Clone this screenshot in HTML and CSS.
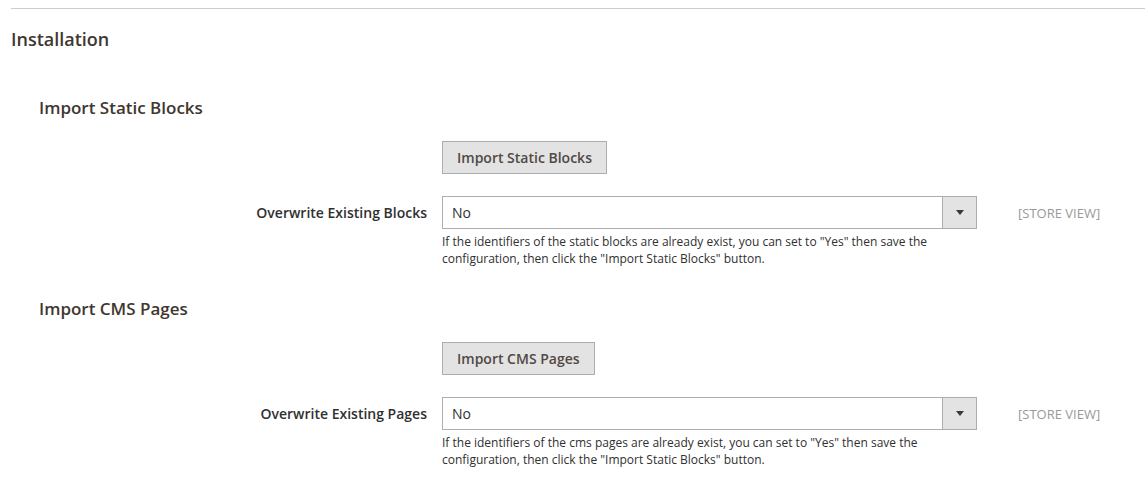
FILE: index.html
```html
<!DOCTYPE html>
<html lang="en">
<head>
<meta charset="utf-8">
<title>Installation</title>
<link rel="stylesheet" href="styles.css">
</head>
<body>
<div class="page">
  <div class="rule"></div>
  <h2 class="title">Installation</h2>

  <section class="group">
    <h3 class="group-title">Import Static Blocks</h3>
    <div class="row">
      <div class="label"></div>
      <div class="control"><button class="btn" type="button">Import Static Blocks</button></div>
      <div class="scope"></div>
    </div>
    <div class="row row-field">
      <div class="label">Overwrite Existing Blocks</div>
      <div class="control">
        <div class="select"><span class="select-value">No</span><span class="select-arrow"></span></div>
      </div>
      <div class="scope">[STORE VIEW]</div>
    </div>
    <div class="row">
      <div class="label"></div>
      <div class="control note">If the identifiers of the static blocks are already exist, you can set to "Yes" then save the configuration, then click the "Import Static Blocks" button.</div>
      <div class="scope"></div>
    </div>
  </section>

  <section class="group group-second">
    <h3 class="group-title">Import CMS Pages</h3>
    <div class="row">
      <div class="label"></div>
      <div class="control"><button class="btn" type="button">Import CMS Pages</button></div>
      <div class="scope"></div>
    </div>
    <div class="row row-field">
      <div class="label">Overwrite Existing Pages</div>
      <div class="control">
        <div class="select"><span class="select-value">No</span><span class="select-arrow"></span></div>
      </div>
      <div class="scope">[STORE VIEW]</div>
    </div>
    <div class="row">
      <div class="label"></div>
      <div class="control note">If the identifiers of the cms pages are already exist, you can set to "Yes" then save the configuration, then click the "Import Static Blocks" button.</div>
      <div class="scope"></div>
    </div>
  </section>
</div>
</body>
</html>
```

FILE: styles.css
```css
* { box-sizing: border-box; }
html, body { margin: 0; padding: 0; background: #fff; }
body {
  font-family: "Open Sans", "Liberation Sans", sans-serif;
  color: #303030;
  font-size: 14px;
}
.page { padding-top: 8px; width: 1145px; }
.rule { margin-left: 11px; border-top: 1px solid #cccccc; }
.title {
  margin: 20px 0 0 11px;
  font-size: 18px;
  font-weight: 600;
  line-height: 20px;
  color: #41362f;
}
.group { margin-top: 49px; }
.group-second { margin-top: 32px; }
.group-title {
  margin: 0 0 23px 39px;
  font-size: 17px;
  font-weight: 600;
  line-height: 20px;
  color: #41362f;
}
.row {
  display: grid;
  grid-template-columns: 442px 535px 1fr;
  align-items: center;
}
.row-field { margin-top: 22px; }
.label {
  padding-right: 15px;
  text-align: right;
  font-weight: 600;
  color: #303030;
}
.scope {
  padding-left: 41px;
  font-size: 13px;
  color: #999999;
}
.btn {
  font-family: inherit;
  font-size: 14px;
  font-weight: 600;
  line-height: 19px;
  color: #514943;
  background: #e3e3e3;
  border: 1px solid #adadad;
  border-radius: 0;
  padding: 6px 14px;
  margin: 0;
  display: block;
}
.select {
  display: flex;
  height: 33px;
  border: 1px solid #adadad;
  background: #fff;
}
.select-value {
  flex: 1;
  padding-left: 9px;
  line-height: 31px;
  color: #303030;
}
.select-arrow {
  width: 34px;
  background: #e3e3e3;
  border-left: 1px solid #adadad;
  position: relative;
}
.select-arrow::after {
  content: "";
  position: absolute;
  left: 13px;
  top: 13px;
  border-left: 4px solid transparent;
  border-right: 4px solid transparent;
  border-top: 5px solid #41362f;
}
.note {
  margin-top: 5px;
  font-size: 12px;
  line-height: 16.5px;
  color: #303030;
  padding-right: 4px;
}
```
